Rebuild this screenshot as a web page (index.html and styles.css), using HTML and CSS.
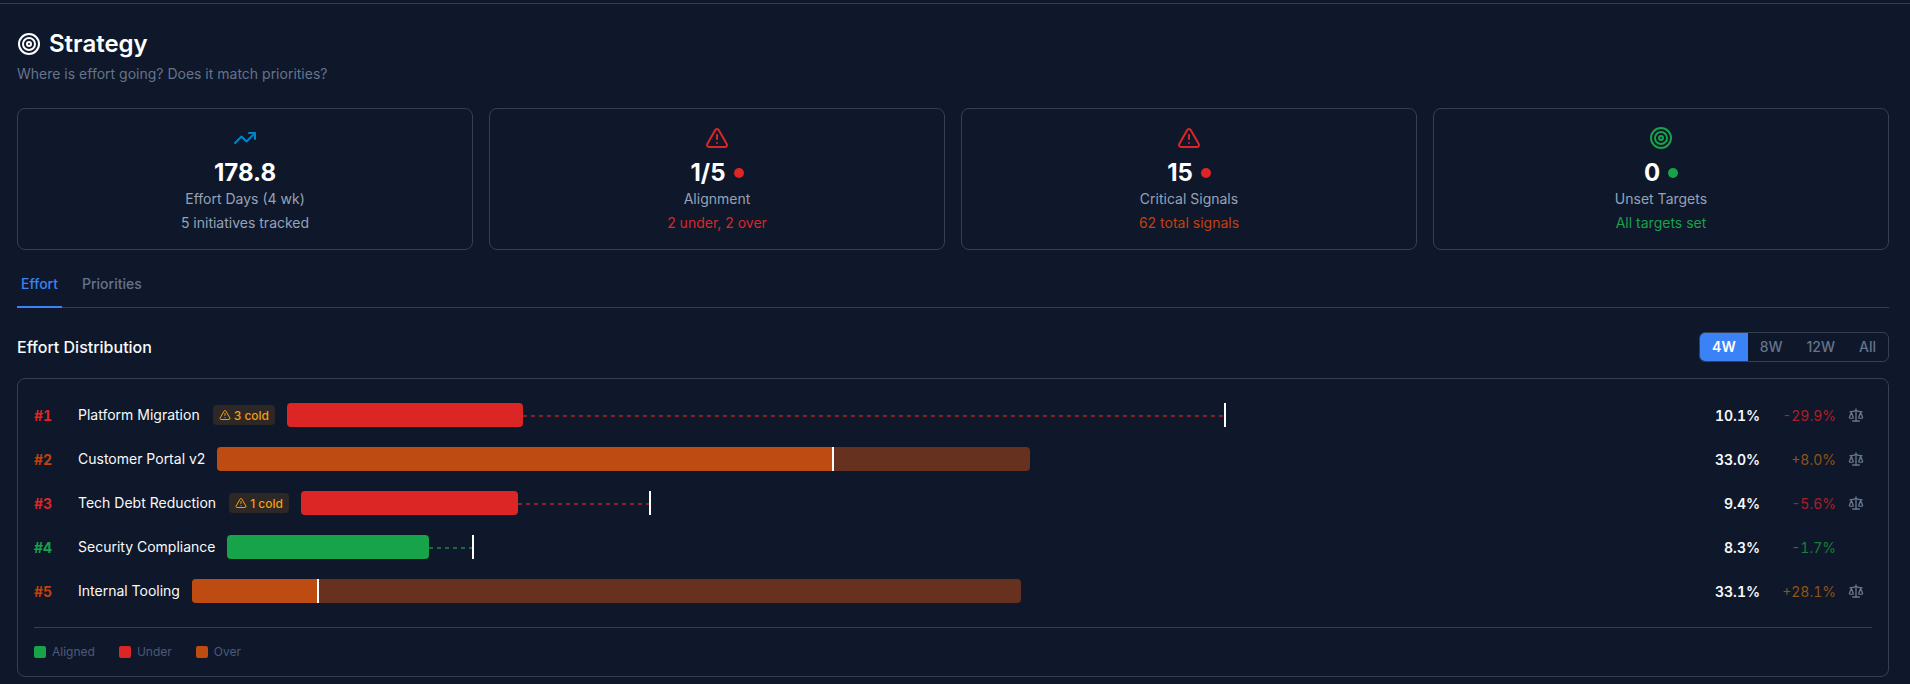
FILE: index.html
```html
<!DOCTYPE html>
<html lang="en">
<head>
<meta charset="utf-8">
<title>Strategy</title>
<link rel="stylesheet" href="styles.css">
</head>
<body>
<svg class="sprite" width="0" height="0" aria-hidden="true">
  <symbol id="i-target" viewBox="0 0 24 24" fill="none" stroke="currentColor" stroke-width="2" stroke-linecap="round" stroke-linejoin="round"><circle cx="12" cy="12" r="10"/><circle cx="12" cy="12" r="6"/><circle cx="12" cy="12" r="2"/></symbol>
  <symbol id="i-warn" viewBox="0 0 24 24" fill="none" stroke="currentColor" stroke-width="2" stroke-linecap="round" stroke-linejoin="round"><path d="m21.73 18-8-14a2 2 0 0 0-3.48 0l-8 14A2 2 0 0 0 4 21h16a2 2 0 0 0 1.73-3"/><path d="M12 9v4"/><path d="M12 17h.01"/></symbol>
  <symbol id="i-trend" viewBox="0 0 24 24" fill="none" stroke="currentColor" stroke-width="2" stroke-linecap="round" stroke-linejoin="round"><path d="M16 7h6v6"/><path d="m22 7-8.5 8.5-5-5L2 17"/></symbol>
  <symbol id="i-scale" viewBox="0 0 24 24" fill="none" stroke="currentColor" stroke-width="2" stroke-linecap="round" stroke-linejoin="round"><path d="m16 16 3-8 3 8c-.87.65-1.92 1-3 1s-2.13-.35-3-1Z"/><path d="m2 16 3-8 3 8c-.87.65-1.92 1-3 1s-2.13-.35-3-1Z"/><path d="M7 21h10"/><path d="M12 3v18"/><path d="M3 7h2c2 0 5-1 7-2 2 1 5 2 7 2h2"/></symbol>
</svg>
<main class="page">
  <header class="head">
    <h1 class="title"><svg class="title-icon"><use href="#i-target"/></svg>Strategy</h1>
    <p class="subtitle">Where is effort going? Does it match priorities?</p>
  </header>

  <section class="cards">
    <article class="card">
      <svg class="card-icon c-blue"><use href="#i-trend"/></svg>
      <div class="value"><span>178.8</span></div>
      <div class="label">Effort Days (4 wk)</div>
      <div class="note c-slate">5 initiatives tracked</div>
    </article>
    <article class="card">
      <svg class="card-icon c-red"><use href="#i-warn"/></svg>
      <div class="value"><span>1/5</span><i class="dot bg-red"></i></div>
      <div class="label">Alignment</div>
      <div class="note c-red">2 under, 2 over</div>
    </article>
    <article class="card">
      <svg class="card-icon c-red"><use href="#i-warn"/></svg>
      <div class="value"><span>15</span><i class="dot bg-red"></i></div>
      <div class="label">Critical Signals</div>
      <div class="note c-orange">62 total signals</div>
    </article>
    <article class="card">
      <svg class="card-icon c-green"><use href="#i-target"/></svg>
      <div class="value"><span>0</span><i class="dot bg-green"></i></div>
      <div class="label">Unset Targets</div>
      <div class="note c-green">All targets set</div>
    </article>
  </section>

  <nav class="tabs">
    <a class="tab tab-active">Effort</a>
    <a class="tab">Priorities</a>
  </nav>

  <div class="section-head">
    <h2 class="section-title">Effort Distribution</h2>
    <div class="range">
      <button class="range-btn range-active">4W</button>
      <button class="range-btn">8W</button>
      <button class="range-btn">12W</button>
      <button class="range-btn">All</button>
    </div>
  </div>

  <section class="panel">
    <div class="rows">
      <div class="row">
        <span class="rank c-red">#1</span>
        <span class="name">Platform Migration</span>
        <span class="cold"><svg class="cold-icon"><use href="#i-warn"/></svg>3 cold</span>
        <div class="track">
          <div class="fill bg-red" style="width:16.47%"></div>
          <div class="gap-line line-red" style="left:16.47%;width:48.95%"></div>
          <div class="marker" style="left:65.46%"></div>
        </div>
        <span class="pct">10.1%</span>
        <span class="delta d-red">-29.9%</span>
        <svg class="scale"><use href="#i-scale"/></svg>
      </div>
      <div class="row">
        <span class="rank c-orange">#2</span>
        <span class="name">Customer Portal v2</span>
        <div class="track">
          <div class="ghost" style="width:54.05%"></div>
          <div class="fill fill-over bg-orange" style="width:41%"></div>
          <div class="marker" style="left:41%"></div>
        </div>
        <span class="pct">33.0%</span>
        <span class="delta d-orange">+8.0%</span>
        <svg class="scale"><use href="#i-scale"/></svg>
      </div>
      <div class="row">
        <span class="rank c-red">#3</span>
        <span class="name">Tech Debt Reduction</span>
        <span class="cold"><svg class="cold-icon"><use href="#i-warn"/></svg>1 cold</span>
        <div class="track">
          <div class="fill bg-red" style="width:15.3%"></div>
          <div class="gap-line line-red" style="left:15.3%;width:9.25%"></div>
          <div class="marker" style="left:24.6%"></div>
        </div>
        <span class="pct">9.4%</span>
        <span class="delta d-red">-5.6%</span>
        <svg class="scale"><use href="#i-scale"/></svg>
      </div>
      <div class="row">
        <span class="rank c-green">#4</span>
        <span class="name name-tight">Security Compliance</span>
        <div class="track">
          <div class="fill bg-green" style="width:13.55%"></div>
          <div class="gap-line line-green" style="left:13.55%;width:2.9%"></div>
          <div class="marker" style="left:16.5%"></div>
        </div>
        <span class="pct">8.3%</span>
        <span class="delta d-green">-1.7%</span>
        <span class="scale"></span>
      </div>
      <div class="row">
        <span class="rank c-orange">#5</span>
        <span class="name">Internal Tooling</span>
        <div class="track">
          <div class="ghost" style="width:54.25%"></div>
          <div class="fill fill-over bg-orange" style="width:8.25%"></div>
          <div class="marker" style="left:8.25%"></div>
        </div>
        <span class="pct">33.1%</span>
        <span class="delta d-orange">+28.1%</span>
        <svg class="scale"><use href="#i-scale"/></svg>
      </div>
    </div>
    <footer class="legend">
      <span class="legend-item"><i class="swatch bg-green"></i>Aligned</span>
      <span class="legend-item"><i class="swatch bg-red"></i>Under</span>
      <span class="legend-item"><i class="swatch bg-orange"></i>Over</span>
    </footer>
  </section>
</main>
</body>
</html>
```

FILE: styles.css
```css
* { box-sizing: border-box; }
html, body { margin: 0; height: 684px; overflow: hidden; }
body {
  background: #0f172a;
  color: #f8fafc;
  font-family: Inter, "Liberation Sans", sans-serif;
}
.sprite { position: absolute; }
.page {
  margin-top: 3px;
  border-top: 1px solid #334155;
  padding: 24px 21px 0 17px;
}
.head { margin-bottom: 24px; }
.title {
  display: flex;
  align-items: center;
  gap: 8px;
  margin: 0;
  font-size: 24px;
  line-height: 32px;
  font-weight: 600;
  color: #fff;
}
.title-icon { width: 24px; height: 24px; }
.subtitle { margin: 4px 0 0; font-size: 14px; line-height: 20px; color: #64748b; }
.cards { display: grid; grid-template-columns: repeat(4, 1fr); gap: 16px; }
.card {
  height: 142px;
  border: 1px solid #334155;
  border-radius: 8px;
  padding: 17px 16px 16px;
  display: flex;
  flex-direction: column;
  align-items: center;
}
.card-icon { width: 24px; height: 24px; flex: none; }
.value {
  display: flex;
  align-items: center;
  gap: 8px;
  margin-top: 7px;
  font-size: 24px;
  line-height: 32px;
  font-weight: 700;
  color: #fff;
}
.dot { width: 10px; height: 10px; border-radius: 50%; }
.label { font-size: 14px; line-height: 20px; color: #94a3b8; }
.note { font-size: 14px; line-height: 20px; margin-top: 4px; }
.c-blue { color: #0284c7; }
.c-slate { color: #94a3b8; }
.c-red { color: #dc2626; }
.c-orange { color: #c2410c; }
.c-green { color: #16a34a; }
.bg-red { background: #dc2626; }
.bg-orange { background: #be4b12; }
.bg-green { background: #16a34a; }
.tabs { display: flex; margin-top: 16px; border-bottom: 1px solid #334155; height: 42px; }
.tab {
  padding: 8px 4px 0;
  margin-right: 16px;
  height: 42px;
  font-size: 14px;
  line-height: 20px;
  font-weight: 500;
  color: #64748b;
  border-bottom: 2px solid transparent;
}
.tab-active { color: #3b82f6; border-bottom-color: #3b82f6; }
.section-head {
  display: flex;
  justify-content: space-between;
  align-items: center;
  margin-top: 24px;
}
.section-title { margin: 0; font-size: 16px; line-height: 24px; font-weight: 500; color: #f8fafc; }
.range { display: flex; border: 1px solid #334155; border-radius: 6px; overflow: hidden; height: 30px; }
.range-btn {
  border: 0;
  background: transparent;
  padding: 0 12px;
  font: 500 14px/20px Inter, "Liberation Sans", sans-serif;
  color: #64748b;
}
.range-active { background: #3b82f6; color: #fff; font-weight: 600; }
.panel {
  margin-top: 16px;
  height: 299px;
  border: 1px solid #334155;
  border-radius: 8px;
  padding: 24px 16px 0;
}
.rows { display: flex; flex-direction: column; gap: 20px; }
.row { display: flex; align-items: center; height: 24px; gap: 12px; }
.rank { width: 32px; font-size: 14px; font-weight: 700; font-variant-numeric: tabular-nums; }
.name { font-size: 14px; line-height: 20px; font-weight: 400; color: #f8fafc; white-space: nowrap; }
.name-tight { margin-right: -1px; }
.cold {
  display: inline-flex;
  align-items: center;
  gap: 3px;
  height: 20px;
  margin-left: 1px;
  padding: 0 6px;
  border-radius: 4px;
  background: rgba(245, 158, 11, .13);
  color: #f59e0b;
  font-size: 12px;
  font-weight: 500;
  white-space: nowrap;
}
.cold-icon { width: 12px; height: 12px; flex: none; }
.track { position: relative; flex: 1; height: 24px; }
.fill { position: absolute; left: 0; top: 0; height: 24px; border-radius: 4px; }
.fill-over { border-radius: 4px 0 0 4px; }
.ghost { position: absolute; left: 0; top: 0; height: 24px; border-radius: 4px; background: #66311e; }
.gap-line { position: absolute; top: 12px; height: 2px; opacity: .6; }
.line-red { background: repeating-linear-gradient(to right, #dc2626 0 4px, transparent 4px 8px); }
.line-green { background: repeating-linear-gradient(to right, #16a34a 0 4px, transparent 4px 8px); }
.marker { position: absolute; top: 0; width: 2px; height: 24px; margin-left: -1px; background: #fff; }
.pct { width: 28px; flex: none; display: flex; justify-content: flex-end; font-size: 14px; font-weight: 600; color: #f8fafc; white-space: nowrap; font-variant-numeric: tabular-nums; }
.delta { width: 64px; flex: none; text-align: right; font-size: 14px; font-weight: 400; white-space: nowrap; font-variant-numeric: tabular-nums; }
.d-red { color: #a8202a; }
.d-orange { color: #8f5318; }
.d-green { color: #15803d; }
.scale { width: 16px; height: 16px; flex: none; margin-right: 8px; color: #64748b; }
.legend {
  display: flex;
  gap: 24px;
  margin-top: 24px;
  padding-top: 16px;
  border-top: 1px solid #334155;
  font-size: 12px;
  line-height: 16px;
  color: #4b5b78;
}
.legend-item { display: inline-flex; align-items: center; gap: 6px; }
.swatch { width: 12px; height: 12px; border-radius: 2px; }
```
